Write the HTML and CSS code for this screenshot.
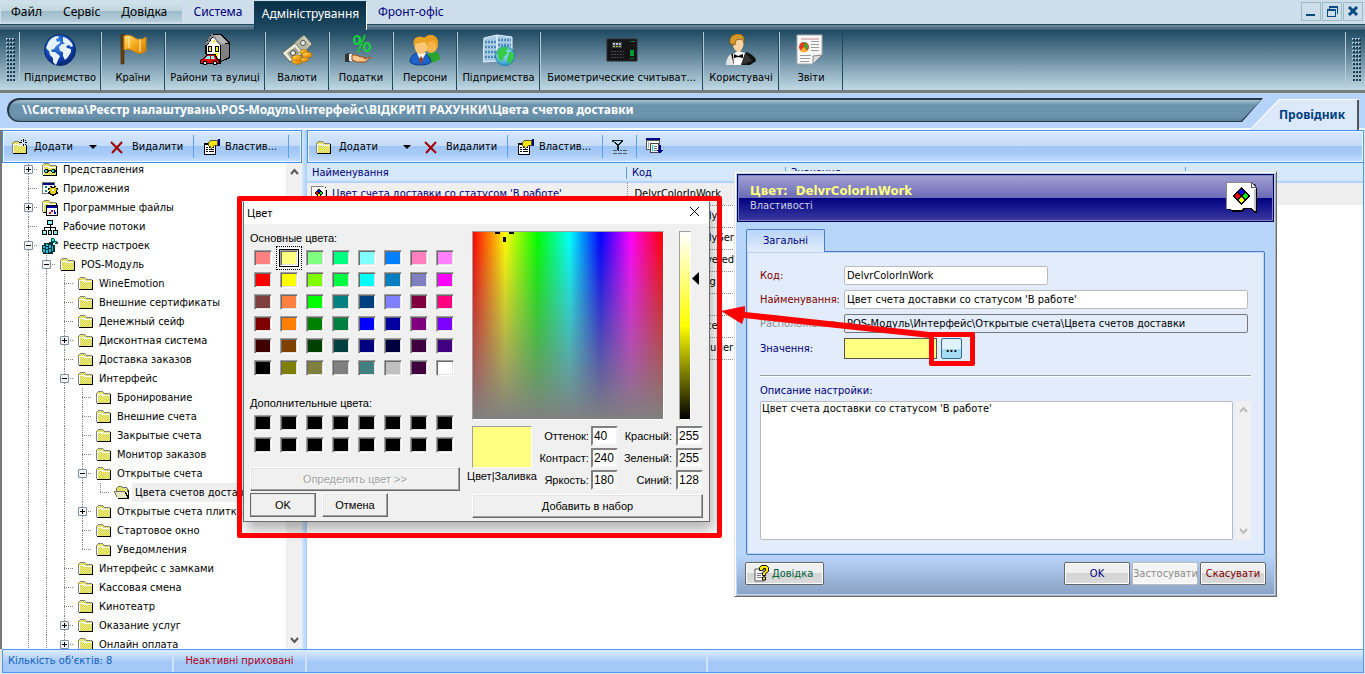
FILE: index.html
```html
<!DOCTYPE html>
<html lang="uk">
<head>
<meta charset="utf-8">
<title>Реєстр налаштувань</title>
<link rel="stylesheet" href="styles.css">
</head>
<body>
<svg class="defs" aria-hidden="true">
  <defs>
    <pattern id="dither" width="2" height="2" patternUnits="userSpaceOnUse"><path fill="#c8c8c8" d="M0 0h2v2H0z"/><path fill="#ffff00" d="M0 0h1v1H0zM1 1h1v1H1z"/></pattern>
    <radialGradient id="globe" cx=".4" cy=".3" r=".8"><stop offset="0" stop-color="#3f8df0"/><stop offset=".6" stop-color="#0d3fae"/><stop offset="1" stop-color="#05205f"/></radialGradient>
    <linearGradient id="gold" x2="1" y2="1"><stop offset="0" stop-color="#ffe27a"/><stop offset=".5" stop-color="#f7a91c"/><stop offset="1" stop-color="#c97a08"/></linearGradient>
    <radialGradient id="earth" cx=".4" cy=".3" r=".8"><stop offset="0" stop-color="#b8f4ff"/><stop offset="1" stop-color="#1e8fc4"/></radialGradient>
  </defs>
  <symbol id="folder" viewBox="0 0 16 16" shape-rendering="crispEdges"><path d="M1 3h1V2h5v1h1v1h6v9H1z" fill="url(#dither)"/><path d="M0 3h1v10H0zM1 2h1v1H1zM2 1h5v1H2zM7 2h1v1H7zM8 3h6v1H8z" fill="#808080"/><path d="M1 4h6v1h7v1H6V5H2v8H1z" fill="#fff"/><path d="M14 4h1v10H1v-1h13z" fill="#000"/></symbol>
  <symbol id="folder-open" viewBox="0 0 16 16" shape-rendering="crispEdges"><path d="M3 12V3h1V2h4v1h5v5l2 5H4z" fill="url(#dither)"/><path d="M2 3h1v5H2zM3 2h1v1H3zM4 1h4v1H4zM8 2h5v1H8zM13 3h1v4h-1zM0 6h11v1H0zM0 7h1v1H0zM1 8h1v2H1zM2 10h1v2H2z" fill="#707070"/><path d="M1 7h10v1h1v2h1v3H4v-1H3v-2H2V8H1z" fill="#e8e8c0"/><path d="M14 5h1v9H4v-1h9v-2h-1V9h-1V7h1v1h1v2h1z"/></symbol>
  <symbol id="views" viewBox="0 0 16 16" shape-rendering="crispEdges"><use href="#folder"/><path d="M3 7h3v1h4V7h3v1h1v2h-1v1h-3v-1H9V9H7v1H6v1H3v-1H2V8h1z"/><path d="M3 8h2v2H3zM10 8h2v2h-2z" fill="#0ff"/></symbol>
  <symbol id="apps" viewBox="0 0 16 16" shape-rendering="crispEdges"><path d="M0 1h13v12H0z" fill="#777"/><path d="M1 4h11v8H1z" fill="#fff"/><path d="M1 2h11v2H1z" fill="#000080"/><path d="M3 5h2v2H3zM3 9h2v2H3z" fill="#088"/><path d="M8 5h2v1h2V5h2v2h2v2h-1v2h1v2h-2v1h-2v1h-2v-1H8v-1H6v-2h1V9H6V7h2z"/><path d="M8 6h1v1h4V6h1v2h1v1h-1v3h-1v1H9v-1H8v-2H7V8h1z" fill="#e8d000"/><path d="M10 8h2v2h-2z" fill="#fff"/></symbol>
  <symbol id="progs" viewBox="0 0 16 16" shape-rendering="crispEdges"><use href="#folder" y="-1"/><path d="M4 5h12v11H4z"/><path d="M5 8h10v7H5z" fill="#fff"/><path d="M5 6h10v2H5z" fill="#00a"/><path d="M7 12h2v2H7z" fill="#d00"/><path d="M9 10h2v2H9z" fill="#808"/><path d="M12 10h1v2h1v2h-2z" fill="#00c"/></symbol>
  <symbol id="flows" viewBox="0 0 16 16" shape-rendering="crispEdges"><path d="M5 1h6v5H9v2h5v3h2v5h-5v-5h2V9H9v2h1v5H6v-5h2V9H3v2h2v5H0v-5h2V8h6V6H5z"/><path d="M6 2h4v3H6zM1 12h3v3H1zM7 12h2v3H7zM12 12h3v3h-3z" fill="#8ee"/></symbol>
  <symbol id="registry" viewBox="0 0 16 16" shape-rendering="crispEdges"><path d="M0 7h2V5h5V4h4v3h2v7h-2v2H1v-2H0z" fill="#033"/><path d="M1 8h2v2H1zM4 6h2v2H4zM4 9h2v2H4zM7 7h2v3H7zM1 11h2v3H1zM4 12h2v3H4zM7 11h2v3H7zM10 8h1v5h-1z" fill="#2bd"/><path d="M9 0h3v1h1v2h2v1h1v2h-3V5h-2V4H9z" fill="#055"/><path d="M10 1h2v2h-2zM12 4h2v1h-2z" fill="#0ee"/></symbol>
  <symbol id="note" viewBox="0 0 32 32" shape-rendering="crispEdges"><path d="M2 2h27l2 5v24h-2l-5-4h-4l-3 2v1H6l-1-2H1z"/><path d="M0 0h25l5 6v23h-2l-3-3h-8l-2 2H5l-1-1H0z" fill="#fff"/><path d="M0 0h25v1H1v26H0z" fill="#888"/><path d="M25 0h1v1h1v1h1v1h1v1h1v1h1v1h-6z" fill="#555"/><path d="M26 2h1v1h1v1h1v1h-3z" fill="#fff"/><path d="M28 7h2v22h-2z" fill="#c4c4c4"/><path d="M15 5l9 9-9 9-9-9z"/><path d="M15 7l3 3-3 3-3-3z" fill="#00f"/><path d="M11 11l3 3-3 3-3-3z" fill="#f00"/><path d="M19 11l3 3-3 3-3-3z" fill="#0e0"/><path d="M15 15l3 3-3 3-3-3z" fill="#ff0"/></symbol>
  <symbol id="cross" viewBox="0 0 16 16"><path d="M2 3l11 11M3 14L13 3" fill="none" stroke="#a00000" stroke-width="2"/></symbol>
  <symbol id="props" viewBox="0 0 17 16" shape-rendering="crispEdges"><path d="M1 4h12v12H1z"/><path d="M2 6h10v9H2z" fill="#fff"/><path d="M3 8h2v1H3zM6 8h5v1H6zM3 10h2v1H3zM6 10h5v1H6zM3 12h2v1H3zM6 12h5v1H6z"/><path d="M5 4l3-3h6v5h-2l-3 3H8l-1-2H6z" fill="#ffe800" stroke="#554"/><path d="M15 0h2v7h-2z" fill="#000080"/></symbol>
</svg>

<div class="app">
  <nav class="menubar">
    <div class="menu-group"><button>Файл</button><button>Сервіс</button><button>Довідка</button></div>
    <button class="menu-tab">Система</button>
    <button class="menu-tab active">Адміністрування</button>
    <button class="menu-tab">Фронт-офіс</button>
    <div class="win-buttons">
      <button aria-label="Згорнути"><svg width="18" height="17"><path d="M4 11h9v2H4z" fill="#004c83"/></svg></button>
      <button aria-label="Відновити"><svg width="18" height="17" shape-rendering="crispEdges"><path d="M6 3h9v2H6zM14 5h1v6h-1zM6 5h1v1H6zM4 6h9v2H4zM4 8h1v6H4zM12 8h1v6h-1zM5 13h7v1H5z" fill="#004c83"/></svg></button>
      <button aria-label="Закрити"><svg width="18" height="17"><path d="M5 4l8 8M13 4l-8 8" stroke="#004c83" stroke-width="3"/></svg></button>
    </div>
  </nav>

  <div class="ribbon">
    <span class="grip"></span>
    <button class="tool w81"><svg width="32" height="32" viewBox="0 0 32 32"><circle cx="16" cy="16" r="15.500" fill="url(#globe)" stroke="#0a2c70"/><path d="M4 9c2-4 6-7 10-7l1 2-3 1 1 3 3-1v2l-4 3-2 3-3 1 1 2 3 0 5 4-2 4-2 5-3-3v-4l-3-3-1-4-3-3zM19 3c5 1 9 5 10 9l-2 1-2-2-3 1 1 2 4 1v3l-3 5-3 3-2-4v-4l-3-1-1-4 3-3 3 0-2-2z" fill="#e6f3fb"/></svg><span>Підприємство</span></button>
    <button class="tool w64"><svg width="32" height="32" viewBox="0 0 32 32"><path d="M4 0h3v30H4z" fill="#6a420f" stroke="#3d2607" stroke-width=".6"/><path d="M7 2c5-2 8 0 11 2s7 2 11-1v14c-4 3-8 3-11 1s-6-4-11-2z" fill="url(#gold)" stroke="#c98410"/><path d="M12 2v12M23 5v13" stroke="#ffe89a" stroke-width="2" opacity=".6"/></svg><span>Країни</span></button>
    <button class="tool w100"><svg width="32" height="32" viewBox="0 0 32 32" shape-rendering="crispEdges"><path d="M6 11L12 0h10l9 9v15l-9 4H7z" fill="#000"/><path d="M22 9l8 1v13l-8 4z" fill="#808080"/><path d="M14 1h7l9 8-8 1z" fill="#b4b4b4"/><path d="M8 12l6-9 7 8v14H8z" fill="#fff"/><path d="M7 11l6-10 9 10" fill="none" stroke="#888" stroke-width="2"/><path d="M9 12h4v6H9zM16 12h4v6h-4z"/><path d="M10 13h2v4h-2zM17 13h2v4h-2zM14 6h2v3h-2zM15 19h4v7h-4z" fill="#ffef20"/><path d="M1 26l4-2 3-4h9l1 4 4 2v4H1z"/><path d="M2 26l4-2 2-3h8l1 4 3 2v2H2z" fill="#e00000"/><path d="M8 22h3v3H6zM12 22h3l1 3h-4z" fill="#8ff"/><circle cx="6" cy="29" r="2.500"/><circle cx="16" cy="29" r="2.500"/><path d="M5 28h2v2H5zM15 28h2v2h-2z" fill="#ddd"/></svg><span>Райони та вулиці</span></button>
    <button class="tool w64"><svg width="32" height="32" viewBox="0 0 32 32"><path d="M12 10L23 1l8 9-10 10z" fill="#cfd2be" stroke="#6c7060"/><path d="M1 19l13-10 9 10-14 9z" fill="#e8ead6" stroke="#555"/><path d="M6 19l8-6 5 6-9 6z" fill="#9ea28c"/><circle cx="12" cy="19" r="2.500" fill="#eee" stroke="#444"/><path d="M14 9l7-6 8 8-7 6z" fill="#b5b9a2"/><circle cx="22" cy="9" r="2.500" fill="#eee" stroke="#555"/><g fill="url(#gold)" stroke="#a66a00" stroke-width=".7"><ellipse cx="23" cy="18" rx="4" ry="2.500"/><ellipse cx="26" cy="21" rx="5" ry="3"/><path d="M11 24v4c2 3 9 3 10 0v-4z"/><ellipse cx="16" cy="24" rx="5" ry="3"/><path d="M20 24v3c2 2 6 1 7-1v-3z"/></g></svg><span>Валюти</span></button>
    <button class="tool w64"><svg width="32" height="32" viewBox="0 0 32 32"><path d="M20 1L13 18" stroke="#14c832" stroke-width="2"/><ellipse cx="12" cy="6" rx="3" ry="4" fill="none" stroke="#14d838" stroke-width="2.200"/><ellipse cx="22" cy="13" rx="3" ry="4" fill="none" stroke="#14d838" stroke-width="2.200"/><path d="M0 20l5-1v9H0z" fill="#333"/><path d="M4 20h3v7H4z" fill="#eee"/><path d="M7 21h4l5 2h4l-1 2 7-2-6 5H12l-5-2z" fill="#f8c78e" stroke="#9a4e14"/></svg><span>Податки</span></button>
    <button class="tool w64"><svg width="32" height="32" viewBox="0 0 32 32"><path d="M18 29v-8l6-4c5 1 7 4 7 8l-5 3z" fill="#27a52d"/><ellipse cx="22" cy="10" rx="7" ry="9" fill="#f5b54a"/><path d="M14 6c2-6 14-8 15 2l-1 6-3-7c-4 1-7 0-11-1z" fill="#e7a01d"/><path d="M1 28c0-6 4-9 10-9s10 3 11 9c-3 4-18 4-21 0z" fill="#1d62c8" stroke="#0a3c8a"/><path d="M8 19l4 9 5-9z" fill="#fff"/><path d="M12 22l2 3-2 5-2-5z" fill="#a8381c"/><ellipse cx="12" cy="12" rx="6.500" ry="8.500" fill="#fbc877"/><path d="M5 12C3 3 9 2 13 3s8 4 6 10l-3-5c-4 1-8 0-11 4z" fill="#e9a524"/></svg><span>Персони</span></button>
    <button class="tool w83"><svg width="32" height="32" viewBox="0 0 32 32"><path d="M1 4l13-3v26L0 28zM14 1l15 2v23H14z" fill="#a8cde6" stroke="#e3f2fb"/><path d="M2 8h11M2 13h11M2 18h11M2 23h11M15 6h13M15 11h13M15 16h13" stroke="#4f88b6" stroke-width="2.500" stroke-dasharray="2 1"/><circle cx="22" cy="22" r="9.500" fill="url(#earth)" stroke="#1b86a8"/><path d="M14 19c1-4 5-6 9-6l3 2-3 2 2 2-4 4-2 4-3-1-1-4zM27 17l4 3v4l-4 6-3-3 1-5z" fill="#36c94a"/></svg><span>Підприємства</span></button>
    <button class="tool w163"><svg width="32" height="32" viewBox="0 0 32 32"><path d="M1 5h30v22H1z" fill="#151517" stroke="#2d2d33"/><path d="M6 8h10v6H6z" fill="#39443e"/><path d="M7 9h2v2H7zM10 9h2v2h-2zM13 9h2v2h-2z" fill="#c8b8d8"/><path d="M7 12h2v1H7zM10 12h2v1h-2zM13 12h2v1h-2z" fill="#b0c070"/><path d="M5 17.500h13M5 20.500h13M5 23.500h13" stroke="#4a4a4e" stroke-dasharray="2 1"/><path d="M24 16h4v6h-4z" fill="#009a35"/><path d="M24 24.500h4M24 7.500h5" stroke="#176f3a"/></svg><span>Биометрические считыват...</span></button>
    <button class="tool w76"><svg width="32" height="32" viewBox="0 0 32 32"><path d="M2 31c1-8 3-11 8-12l7 3 5-4c5 3 9 5 9 9l-6 4z" fill="#111"/><path d="M8 20l5-3 7 2-4 12H9z" fill="#fff"/><path d="M9 20l4 2 5-2v4l-5-1-4 1z" fill="#000"/><path d="M1 31c0-5 2-9 5-11l3 11z" fill="#e4e4e4"/><path d="M16 31l5-12 6 8z" fill="#353535"/><path d="M8 4c4-5 11-3 11 2l-1 7-3 5-4-1c-3-3-4-7-3-13z" fill="#fbd3a0"/><path d="M5 10C3 2 10-1 15 0c4 1 5 5 4 9l-2-4-6 1-1 5z" fill="#d3992b" stroke="#5f3b00" stroke-width=".6"/></svg><span>Користувачі</span></button>
    <button class="tool w64"><svg width="32" height="32" viewBox="0 0 32 32"><path d="M2 1h25v20l-9 9H2z" fill="#f8f8f8" stroke="#aaa"/><path d="M27 21l-9 9v-8z" fill="#ddd" stroke="#888"/><path d="M6 5h18" stroke="#c88" /><circle cx="9" cy="13" r="5" fill="#e03c20"/><path d="M9 13V8a5 5 0 0 1 3 8z" fill="#4ba52a"/><path d="M9 13l3 4a5 5 0 0 1-7 0z" fill="#f7b52a"/><path d="M16 7.500h8M16 10.500h8M16 13.500h8M16 16.500h8M5 21.500h11M5 24.500h10M5 27.500h9" stroke="#999"/></svg><span>Звіти</span></button>
    <span class="ribbon-end"></span>
    <span class="grip grip-end"></span>
  </div>

  <div class="pathbar">
    <div class="path-shell"><div class="path">\\Система\Реєстр налаштувань\POS-Модуль\Інтерфейс\ВІДКРИТІ РАХУНКИ\Цвета счетов доставки</div></div>
    <div class="explorer-shell"><button class="explorer">Провідник</button></div>
  </div>

  <div class="workspace">
    <section class="left">
      <div class="toolbar">
        <button class="add"><svg width="16" height="16" shape-rendering="crispEdges"><use href="#folder" x="1" y="1"/><path d="M9 0h7v6H9z" fill="#c9dffb"/><path d="M12 0h1v3h-1zM12 5h1v2h-1zM8 3h3v1H8zM14 3h2v1h-2zM10 1h1v1h-1zM14 5h1v1h-1zM14 1h1v1h-1z"/></svg><span>Додати</span><i class="caret"></i></button>
        <button class="del"><svg width="16" height="16"><use href="#cross"/></svg><span>Видалити</span></button>
        <button class="prop"><svg width="17" height="16"><use href="#props"/></svg><span>Властив...</span></button>
      </div>
      <div class="tree-wrap">
        <ul class="tree">
          <li><i class="g t"><button class="plus" aria-label="Розгорнути"></button></i><svg><use href="#views"/></svg><span>Представления</span></li>
          <li><i class="g t"></i><svg><use href="#apps"/></svg><span>Приложения</span></li>
          <li><i class="g t"><button class="plus" aria-label="Розгорнути"></button></i><svg><use href="#progs"/></svg><span>Программные файлы</span></li>
          <li><i class="g t"></i><svg><use href="#flows"/></svg><span>Рабочие потоки</span></li>
          <li><i class="g t"><button aria-label="Згорнути"></button></i><svg><use href="#registry"/></svg><span>Реестр настроек</span></li>
          <li><i class="g v"></i><i class="g t"><button aria-label="Згорнути"></button></i><svg><use href="#folder"/></svg><span>POS-Модуль</span></li>
          <li><i class="g v"></i><i class="g v"></i><i class="g t"></i><svg><use href="#folder"/></svg><span>WineEmotion</span></li>
          <li><i class="g v"></i><i class="g v"></i><i class="g t"></i><svg><use href="#folder"/></svg><span>Внешние сертификаты</span></li>
          <li><i class="g v"></i><i class="g v"></i><i class="g t"></i><svg><use href="#folder"/></svg><span>Денежный сейф</span></li>
          <li><i class="g v"></i><i class="g v"></i><i class="g t"><button class="plus" aria-label="Розгорнути"></button></i><svg><use href="#folder"/></svg><span>Дисконтная система</span></li>
          <li><i class="g v"></i><i class="g v"></i><i class="g t"></i><svg><use href="#folder"/></svg><span>Доставка заказов</span></li>
          <li><i class="g v"></i><i class="g v"></i><i class="g t"><button aria-label="Згорнути"></button></i><svg><use href="#folder"/></svg><span>Интерфейс</span></li>
          <li><i class="g v"></i><i class="g v"></i><i class="g v"></i><i class="g t"></i><svg><use href="#folder"/></svg><span>Бронирование</span></li>
          <li><i class="g v"></i><i class="g v"></i><i class="g v"></i><i class="g t"></i><svg><use href="#folder"/></svg><span>Внешние счета</span></li>
          <li><i class="g v"></i><i class="g v"></i><i class="g v"></i><i class="g t"></i><svg><use href="#folder"/></svg><span>Закрытые счета</span></li>
          <li><i class="g v"></i><i class="g v"></i><i class="g v"></i><i class="g t"></i><svg><use href="#folder"/></svg><span>Монитор заказов</span></li>
          <li><i class="g v"></i><i class="g v"></i><i class="g v"></i><i class="g t"><button aria-label="Згорнути"></button></i><svg><use href="#folder"/></svg><span>Открытые счета</span></li>
          <li><i class="g v"></i><i class="g v"></i><i class="g v"></i><i class="g v"></i><i class="g l"></i><svg><use href="#folder-open"/></svg><span class="selected">Цвета счетов доставки</span></li>
          <li><i class="g v"></i><i class="g v"></i><i class="g v"></i><i class="g t"><button class="plus" aria-label="Розгорнути"></button></i><svg><use href="#folder"/></svg><span>Открытые счета плитками</span></li>
          <li><i class="g v"></i><i class="g v"></i><i class="g v"></i><i class="g t"></i><svg><use href="#folder"/></svg><span>Стартовое окно</span></li>
          <li><i class="g v"></i><i class="g v"></i><i class="g v"></i><i class="g l"></i><svg><use href="#folder"/></svg><span>Уведомления</span></li>
          <li><i class="g v"></i><i class="g v"></i><i class="g t"></i><svg><use href="#folder"/></svg><span>Интерфейс с замками</span></li>
          <li><i class="g v"></i><i class="g v"></i><i class="g t"></i><svg><use href="#folder"/></svg><span>Кассовая смена</span></li>
          <li><i class="g v"></i><i class="g v"></i><i class="g t"></i><svg><use href="#folder"/></svg><span>Кинотеатр</span></li>
          <li><i class="g v"></i><i class="g v"></i><i class="g t"><button class="plus" aria-label="Розгорнути"></button></i><svg><use href="#folder"/></svg><span>Оказание услуг</span></li>
          <li><i class="g v"></i><i class="g v"></i><i class="g t"><button class="plus" aria-label="Розгорнути"></button></i><svg><use href="#folder"/></svg><span>Онлайн оплата</span></li>
        </ul>
        <div class="scroll"><svg width="9" height="8"><path d="M1 6l3.500-4L8 6" fill="none" stroke="#555" stroke-width="2"/></svg><svg width="9" height="8"><path d="M1 2l3.500 4L8 2" fill="none" stroke="#555" stroke-width="2"/></svg></div>
      </div>
    </section>
    <div class="splitter"></div>
    <section class="right">
      <div class="toolbar">
        <button class="add"><svg width="16" height="16"><use href="#folder" y="1"/></svg><span>Додати</span><i class="caret"></i></button>
        <button class="del"><svg width="16" height="16"><use href="#cross"/></svg><span>Видалити</span></button>
        <button class="prop"><svg width="17" height="16"><use href="#props"/></svg><span>Властив...</span></button>
        <button class="flt" aria-label="Фільтр"><svg width="17" height="16" shape-rendering="crispEdges"><path d="M1 1h11v2h-1v1h-1v1H9v1H8v6H7v-1H6V6H5V5H4V4H3V3H1z" fill="#122"/><path d="M3 2h7v1H9v1H8v1H6V4H5V3H3z" fill="#bde"/><path d="M2 11h4v1H2zM9 11h2v1H9zM12 11h4v1h-4zM2 14h4v1H2zM7 14h4v1H7zM12 14h4v1h-4z" fill="#555"/></svg></button>
        <button class="cols" aria-label="Стовпці"><svg width="17" height="17" shape-rendering="crispEdges"><path d="M0 0h14v12H0z" fill="#555"/><path d="M1 3h12v8H1z" fill="#fff"/><path d="M0 0h14v2H0z" fill="#000090"/><path d="M2 4h1v6H2z" fill="#aaa"/><path d="M4 5h9v10H4z" fill="#444"/><path d="M5 6h7v8H5z" fill="#fff"/><path d="M6 7h1v6H6z" fill="#0cc"/><path d="M8 8h3v1H8zM8 10h3v1H8zM8 12h3v1H8z" fill="#777"/><path d="M13 7h2v5h2v1h-1v1h-1v1h-2v-1h-1v-1h-1v-1h2z" fill="#000090"/></svg></button>
      </div>
      <table class="list">
        <thead><tr><th class="c1">Найменування</th><th class="c2">Код</th><th class="c3">Значення</th><th class="c4"></th></tr></thead>
        <tbody>
          <tr class="current"><td><svg width="16" height="16"><use href="#note"/></svg>Цвет счета доставки со статусом 'В работе'</td><td>DelvrColorInWork</td><td></td><td></td></tr>
          <tr><td></td><td>DelvrColorReady</td><td></td><td></td></tr>
          <tr><td></td><td>DelvrColorReadySend</td><td></td><td></td></tr>
          <tr><td></td><td>DelvrColorDelivered</td><td></td><td></td></tr>
          <tr><td></td><td>DelvrColorDoing</td><td></td><td></td></tr>
          <tr><td></td><td>DelvrColorNew</td><td></td><td></td></tr>
          <tr><td></td><td>DelvrColorCancel</td><td></td><td></td></tr>
          <tr><td></td><td>DelvrColorToCourier</td><td></td><td></td></tr>
        </tbody>
      </table>
    </section>
  </div>

  <footer class="status"><span class="s1">Кількість об'єктів: 8</span><span class="s2">Неактивні приховані</span><span class="s3"></span></footer>
</div>

<section class="window props-window" aria-label="Властивості">
  <header class="props-head">
    <div><h1>Цвет:&nbsp; DelvrColorInWork</h1><p>Властивості</p></div>
    <svg width="32" height="32"><use href="#note"/></svg>
  </header>
  <div class="props-body">
    <button class="page-tab">Загальні</button>
    <div class="page">
      <div class="form">
        <label class="req" for="code">Код:</label><input id="code" class="short" value="DelvrColorInWork">
        <label class="req" for="name">Найменування:</label><input id="name" value="Цвет счета доставки со статусом 'В работе'">
        <label class="off" for="place">Расположение:</label><input id="place" class="ro" readonly value="POS-Модуль\Интерфейс\Открытые счета\Цвета счетов доставки">
        <label for="value">Значення:</label><div class="value"><input id="value" class="color"><button class="more" aria-label="Обрати колір"><b>...</b></button></div>
      </div>
      <hr>
      <label class="desc" for="desc">Описание настройки:</label>
      <div class="memo"><textarea id="desc">Цвет счета доставки со статусом 'В работе'</textarea><div class="scroll"><svg width="9" height="8"><path d="M1 6l3.500-4L8 6" fill="none" stroke="#bbb" stroke-width="2"/></svg><svg width="9" height="8"><path d="M1 2l3.500 4L8 2" fill="none" stroke="#bbb" stroke-width="2"/></svg></div></div>
    </div>
  </div>
  <footer class="props-foot">
    <button class="help"><svg width="16" height="17"><path d="M1 4h9v12H1z" fill="#fff" stroke="#555"/><path d="M3 8.500h5M3 10.500h4M3 12.500h5" stroke="#777"/><path d="M5.500 5.500v-3l2-2h5l2 2v4l-3 2v2h-3V7.500l3-2v-2h-2l-1 2zM8.500 12h3v3h-3z" fill="#ffe900" stroke="#111"/></svg>Довідка</button>
    <span class="grow"></span>
    <button class="ok">OK</button><button disabled>Застосувати</button><button class="cancel">Скасувати</button>
  </footer>
</section>

<section class="window color-window" aria-label="Цвет">
  <header class="color-head"><span>Цвет</span><button aria-label="Закрыть"><svg width="11" height="11"><path d="M1 1l9 9M10 1l-9 9" stroke="#000"/></svg></button></header>
  <div class="color-body">
    <div class="palette">
      <p>Основные цвета:</p>
      <div class="swatches">
        <button style="background:#ff8080"></button><button class="picked" style="background:#ffff80"></button><button style="background:#80ff80"></button><button style="background:#00ff80"></button><button style="background:#80ffff"></button><button style="background:#0080ff"></button><button style="background:#ff80c0"></button><button style="background:#ff80ff"></button>
        <button style="background:#ff0000"></button><button style="background:#ffff00"></button><button style="background:#80ff00"></button><button style="background:#00ff40"></button><button style="background:#00ffff"></button><button style="background:#0080c0"></button><button style="background:#8080c0"></button><button style="background:#ff00ff"></button>
        <button style="background:#804040"></button><button style="background:#ff8040"></button><button style="background:#00ff00"></button><button style="background:#008080"></button><button style="background:#004080"></button><button style="background:#8080ff"></button><button style="background:#800040"></button><button style="background:#ff0080"></button>
        <button style="background:#800000"></button><button style="background:#ff8000"></button><button style="background:#008000"></button><button style="background:#008040"></button><button style="background:#0000ff"></button><button style="background:#0000a0"></button><button style="background:#800080"></button><button style="background:#8000ff"></button>
        <button style="background:#400000"></button><button style="background:#804000"></button><button style="background:#004000"></button><button style="background:#004040"></button><button style="background:#000080"></button><button style="background:#000040"></button><button style="background:#400040"></button><button style="background:#400080"></button>
        <button style="background:#000000"></button><button style="background:#808000"></button><button style="background:#808040"></button><button style="background:#808080"></button><button style="background:#408080"></button><button style="background:#c0c0c0"></button><button style="background:#400040"></button><button style="background:#ffffff"></button>
      </div>
      <p class="custom">Дополнительные цвета:</p>
      <div class="swatches black">
        <button></button><button></button><button></button><button></button><button></button><button></button><button></button><button></button>
        <button></button><button></button><button></button><button></button><button></button><button></button><button></button><button></button>
      </div>
      <button class="classic define" disabled>Определить цвет &gt;&gt;</button>
      <div class="pair"><button class="classic default">OK</button><button class="classic">Отмена</button></div>
    </div>
    <div class="mixer">
      <div class="fields">
        <div class="spectrum"><svg width="20" height="12"><path d="M0 0h5v2H0zM14 0h5v2h-5zM8 5h3v5H8z"/></svg></div>
        <div class="lum"></div>
        <svg class="lum-mark" width="7" height="13"><path d="M7 0v13L0 6.500z"/></svg>
      </div>
      <div class="values">
        <div class="preview"><div class="chip"></div><span>Цвет|Заливка</span></div>
        <div class="nums">
          <label for="hue">Оттенок:</label><input id="hue" value="40"><label for="red">Красный:</label><input id="red" value="255">
          <label for="sat">Контраст:</label><input id="sat" value="240"><label for="green">Зеленый:</label><input id="green" value="255">
          <label for="lumv">Яркость:</label><input id="lumv" value="180"><label for="blue">Синий:</label><input id="blue" value="128">
        </div>
      </div>
      <button class="classic addset">Добавить в набор</button>
    </div>
  </div>
</section>

<div class="mark mark-big"></div>
<div class="mark mark-small"></div>
<svg class="arrow" width="210" height="40"><path d="M0 7L24 2v6l185 20v6L23 14l-2 6z" fill="#f00"/></svg>
</body>
</html>
```
FILE: styles.css
```css
* { box-sizing: border-box; }
body { margin: 0; height: 100vh; overflow: hidden; font: 11px/14px "DejaVu Sans Condensed", "Noto Sans", sans-serif; color: #000; background: #e4e4e4; }
button, input, textarea { font: inherit; color: inherit; margin: 0; padding: 0; border: 0; border-radius: 0; background: none; }
svg { display: block; flex: none; }
p, h1, ul { margin: 0; padding: 0; }
.defs { position: absolute; width: 0; height: 0; }
.app { height: 100vh; display: flex; flex-direction: column; padding-bottom: 1px; }

.menubar { flex: none; height: 24px; display: flex; align-items: flex-start; background: #cddde9; font: 12px/14px "Noto Sans", sans-serif; color: #000080; padding-top: 1px; }
.menu-group { display: flex; width: 181px; height: 21px; margin-left: 1px; color: #000; background: linear-gradient(#cfe4ea, #c0d4de 50%, #9ebccb 50%, #b8cfdc); }
.menu-group button { padding: 0 11px 0 10px; }
.menu-tab { height: 22px; padding: 0 11px; }
.menu-tab.active { position: relative; width: 113px; height: 29px; margin-left: auto; padding: 0 0 4px; color: #fff; background: linear-gradient(#072f48, #1f4a62); border: 1px solid #104058; border-bottom: 0; border-right-color: #fff; }
.menubar > .menu-tab:nth-child(2) { width: 72px; }
.menu-tab.active { margin-left: 0; }
.win-buttons { display: flex; gap: 1px; margin: 1px 2px 0 auto; }
.win-buttons button { border: 1px solid #9bbcc6; height: 19px; width: 20px; }

.ribbon { flex: none; height: 69px; display: flex; border-top: 1px solid #1f4a5f; border-bottom: 3px solid #777d7f; padding-top: 7px; background: linear-gradient(#6f8c9c, #3a5d70) top / 100% 5px no-repeat, linear-gradient(#1f4a62 5px, #7092a6 55%, #c0dae5); }
.grip { width: 9px; height: 43px; margin: 6px 5px 0 6px; background: radial-gradient(circle at 1px 1px, #163a50 1px, transparent 1px) 1px 1px / 3px 4px, radial-gradient(circle at 1px 1px, #a8c4d2 1px, transparent 1px) 0 0 / 3px 4px; }
.grip-end { margin-right: 4px; }
.tool { display: flex; flex-direction: column; align-items: center; gap: 5px; padding-top: 2px; border-left: 1px solid #b4ccd8; border-right: 1px solid #1f4a5f; white-space: nowrap; }
.w64 { width: 64px; } .w76 { width: 76px; } .w81 { width: 82px; } .w83 { width: 83px; } .w100 { width: 100px; } .w163 { width: 163px; }
.w81 { margin-left: -1px; }
.ribbon-end { flex: 1; border-right: 1px solid #b4ccd8; }

.pathbar { flex: none; height: 37px; display: flex; background: linear-gradient(#b6d3fa, #b6d3fa 35px, #fff 35px); padding: 5px 6px 0 7px; font: bold 12px/14px "Noto Sans", sans-serif; }
.path-shell { flex: 1; height: 24px; margin-right: -14px; padding: 2px 1px 1px 2px; background: #263846; border-radius: 12px 0 0 12px; clip-path: polygon(0 0, 100% 0, calc(100% - 21px) 100%, 0 100%); }
.path { height: 21px; padding-left: 13px; line-height: 20px; color: #fff; border-radius: 11px 0 0 11px; background: linear-gradient(#a9c2d1, #6b93ad 5px, #6b93ad 16px, #5c829b); clip-path: polygon(0 0, calc(100% - 1px) 0, calc(100% - 21px) 100%, 0 100%); white-space: nowrap; overflow: hidden; }
.explorer-shell { width: 110px; margin-top: 1px; height: 31px; background: #fff; clip-path: polygon(30px 0, 100% 0, 100% 100%, 0 100%); }
.explorer { width: 110px; height: 30px; margin-top: 1px; padding-left: 18px; color: #003f80; background: #dbe9fb; border-right: 2px solid #555; clip-path: polygon(31px 0, 100% 0, 100% 100%, 1px 100%); }

.workspace { flex: 1; min-height: 0; display: flex; border-left: 2px solid #777; }
.left { width: 300px; display: flex; flex-direction: column; }
.splitter { width: 5px; background: linear-gradient(90deg, #d6e8fc, #a9cdfa); }
.right { flex: 1; min-width: 0; background: #fff; border-right: 1px solid #4f9af0; margin-right: 1px; }
.toolbar { flex: none; height: 33px; display: flex; align-items: stretch; padding: 4px 0; border: 1px solid #3f90ee; box-shadow: inset 0 0 0 1px #eef6ff; background: linear-gradient(#d8e8fc, #c4dbf9 48%, #9fc5f6 50%, #a9ccf8 75%, #c6defb); }
.toolbar button { display: flex; align-items: center; gap: 7px; padding-left: 8px; white-space: nowrap; }
.toolbar .add { width: 98px; }
.toolbar .del { width: 93px; border-right: 1px solid #5b9fee; }
.toolbar .prop { width: 95px; padding-left: 9px; gap: 5px; border-right: 1px solid #5b9fee; }
.toolbar .flt { width: 34px; border-right: 1px solid #5b9fee; }
.toolbar .cols { width: 34px; padding-left: 9px; }
.right .add { width: 107px; }
.right .toolbar { border-right: 0; }
.caret { margin-left: auto; margin-right: 4px; border: 4px solid transparent; border-top-color: #000; border-bottom: 0; }

.tree-wrap { flex: 1; min-height: 0; display: flex; background: #fff; }
.tree { flex: 1; min-width: 0; overflow: hidden; list-style: none; padding-left: 17px; }
.tree li { height: 19px; display: flex; align-items: center; white-space: nowrap; }
.tree li:first-child { margin-top: -3px; }
.tree li > svg { width: 16px; height: 16px; margin-left: 5px; }
.tree li > span { padding: 0 0 0 5px; line-height: 19px; }
.tree .selected { background: #efefef; padding-left: 3px; margin-left: 2px; }
.g { flex: none; width: 18px; height: 19px; display: flex; align-items: center; justify-content: center; background: repeating-linear-gradient(#808080 0 1px, transparent 1px 2px) 9px 0 / 1px 100% no-repeat; }
.g.t { background: repeating-linear-gradient(#808080 0 1px, transparent 1px 2px) 9px 0 / 1px 100% no-repeat, repeating-linear-gradient(90deg, #808080 0 1px, transparent 1px 2px) 9px 9px / 9px 1px no-repeat; }
.g.l { background: repeating-linear-gradient(#808080 0 1px, transparent 1px 2px) 9px 0 / 1px 10px no-repeat, repeating-linear-gradient(90deg, #808080 0 1px, transparent 1px 2px) 9px 9px / 9px 1px no-repeat; }
.g button { width: 9px; height: 9px; border: 1px solid #7c8ea0; border-radius: 1px; background: linear-gradient(#000, #000) center / 5px 1px no-repeat, #f4f4f4; }
.g .plus { background: linear-gradient(#000, #000) center / 5px 1px no-repeat, linear-gradient(#000, #000) center / 1px 5px no-repeat, #f4f4f4; }
.scroll { width: 16px; display: flex; flex-direction: column; justify-content: space-between; align-items: center; padding: 5px 0; background: #f0f0f0; }

.list { width: 100%; table-layout: fixed; border-collapse: collapse; }
.list th { height: 20px; padding: 0 5px; text-align: left; font-weight: normal; color: #000080; background: linear-gradient(#5b9fee, #5b9fee) right 4px / 1px 12px no-repeat, linear-gradient(#d6e8fc 17px, #a3cbfa); }
.list .c1 { width: 320px; } .list .c2 { width: 159px; } .list .c3 { width: 400px; }
.list .c4 { background: linear-gradient(#d6e8fc 17px, #a3cbfa); }
.list td { height: 22px; padding: 0 7px; white-space: nowrap; overflow: hidden; border-right: 1px dotted #888; border-bottom: 1px dotted #888; }
.list td:nth-child(n+3) { border: 0; }
.list td:first-child { padding-left: 4px; color: #000080; }
.list td svg { display: inline-block; vertical-align: middle; margin-right: 5px; }
.list .current { background: #efefef; }

.status { flex: none; height: 24px; margin: 0 1px 0 2px; display: flex; line-height: 22px; border: 1px solid #4f9af0; background: linear-gradient(#dfecfd, #a5c9f7 55%); color: #1060c0; white-space: nowrap; }
.status span { border-right: 2px solid #cfe3fc; }
.s1 { width: 171px; padding-left: 5px; }
.s2 { width: 133px; text-align: center; color: #b00020; }
.s3 { width: 401px; }

.window { position: absolute; }
.props-window { left: 734px; top: 171px; width: 543px; display: flex; flex-direction: column; background: #b8d5fa; border: 1px solid #e4e4e4; border-right-color: #696969; border-bottom-color: #696969; box-shadow: inset 1px 1px #fff, inset -1px -1px #b0b0b0; padding: 2px; }
.props-head { display: flex; justify-content: space-between; align-items: flex-start; height: 48px; padding: 6px 14px 0 11px; border: 2px solid #8080c8; outline: 1px solid #000050; outline-offset: -1px; background: linear-gradient(#a09fd3, #6c6bb6 50%, #000080 50%, #3838a0); color: #d0d0e8; }
.props-head h1 { font-size: 13px; line-height: 17px; color: #ffff80; }
.props-body { padding: 7px 9px 0; }
.page-tab { position: relative; display: block; width: 79px; height: 23px; margin-bottom: -1px; color: #000080; border: 1px solid #4a7dc6; border-bottom: 0; border-radius: 2px 2px 0 0; background: linear-gradient(#b8d5fa, #e2ecfb); }
.page { padding: 14px 13px; border: 1px solid #4a7dc6; box-shadow: inset 0 0 0 1px #bcd3f5; border-radius: 0 2px 2px 2px; background: #e2ecfb; }
.form { display: grid; grid-template-columns: 84px 1fr; gap: 5px 0; align-items: center; padding-right: 3px; color: #000080; }
.form input { width: 100%; height: 19px; padding: 0 2px; color: #000; background: #fff; border: 1px solid #bbb; border-radius: 2px; }
.form .short { width: 204px; }
.form .ro { border-color: #777; background: #e2ecfb; }
.form .req { color: #800000; }
.form .off { color: #8c8c8c; }
.value { display: flex; align-items: center; gap: 4px; }
.form .color { width: 93px; height: 21px; border-color: #555; border-radius: 0; background: #ffff80; }
.more { width: 21px; height: 21px; border: 1px solid #2f6c9c; border-radius: 2px; background: linear-gradient(#e0f2fb 50%, #a6dbf5 50%); color: #000; line-height: 15px; }
.page hr { margin: 16px 0 7px; border: 0; height: 2px; background: linear-gradient(#999 50%, #fff 50%); }
.desc { display: block; color: #000080; margin-bottom: 3px; }
.memo { display: flex; gap: 2px; }
.memo textarea { flex: 1; height: 139px; padding: 0 1px; resize: none; background: #fff; border: 1px solid #bbb; border-radius: 2px; }
.props-foot { display: flex; gap: 2px; padding: 7px 8px 9px; background: linear-gradient(#b8d5fa, #8ba3c4); }
.props-foot button { width: 66px; height: 23px; border: 1px solid #666; border-radius: 2px; box-shadow: inset 0 0 0 1px #fff; background: linear-gradient(#efefef 50%, #d4d4d4 50%, #dadada); white-space: nowrap; }
.props-foot .help { width: 79px; display: flex; align-items: center; gap: 2px; padding-left: 8px; color: #006040; }
.props-foot .ok { color: #000080; }
.props-foot .cancel { color: #800000; }
.props-foot button:disabled { color: #8c8c8c; background: #f4f4f4; border-color: #bbb; }
.grow { flex: 1; }

.color-window { left: 243px; top: 201px; width: 467px; height: 321px; border: 1px solid #6b6b6b; border-top-color: #fff; background: #f0f0f0; box-shadow: 3px 8px 12px rgba(0,0,0,.3); font: 11px/14px "Liberation Sans", Arial, sans-serif; }
.color-head { display: flex; justify-content: space-between; align-items: center; height: 22px; padding: 0 9px 0 3px; background: #fff; font: 11px/20px "Noto Sans", sans-serif; }
.color-head button { margin-bottom: 4px; }
.color-body { display: flex; gap: 12px; padding: 7px 6px 0 5px; }
.palette { width: 211px; padding-left: 1px; }
.swatches { display: grid; grid-template-columns: repeat(8, 18px); gap: 6px 8px; padding: 5px 0 0 4px; }
.swatches button { height: 16px; border: 1px solid; border-color: #a0a0a0 #fff #fff #a0a0a0; box-shadow: inset 1px 1px #696969, inset -1px -1px #e3e3e3; }
.swatches .picked { outline: 1px solid #000; box-shadow: inset 1px 1px #696969, inset -1px -1px #e3e3e3, 0 0 0 2px #fff; position: relative; }
.swatches .picked::after { content: ""; position: absolute; inset: -5px; border: 1px dotted #000; }
.black button { background: #000; }
.custom { margin-top: 20px; }
.classic { border: 1px solid; border-color: #fff #696969 #696969 #fff; box-shadow: inset -1px -1px #a0a0a0, inset 1px 1px #e3e3e3; background: #f0f0f0; height: 24px; width: 66px; }
.classic:disabled { color: #a0a0a0; text-shadow: 1px 1px #fff; }
.define { width: 210px; margin-top: 14px; }
.pair { display: flex; gap: 6px; margin-top: 2px; }
.default { outline: 1px solid #696969; outline-offset: -1px; }
.mixer { flex: 1; }
.fields { display: flex; }
.spectrum { width: 192px; height: 189px; border: 1px solid #a0a0a0; border-right-color: #fff; border-bottom-color: #fff; padding-left: 22px; background: linear-gradient(transparent, #808080), linear-gradient(90deg, #f00, #ff0 17%, #0f0 34%, #0ff 51%, #00f 67%, #f0f 83%, #f00); }
.lum { width: 12px; margin-left: 15px; border: 1px solid #a0a0a0; border-right-color: #fff; border-bottom-color: #fff; background: linear-gradient(#fff, #ff0 50%, #000); }
.lum-mark { margin: 41px 0 0 1px; }
.values { display: flex; justify-content: space-between; margin-top: 6px; height: 68px; }
.preview { width: 70px; margin-left: -5px; white-space: nowrap; }
.chip { width: 60px; height: 42px; margin: 0 0 1px 5px; border: 1px solid #a0a0a0; border-right-color: #fff; border-bottom-color: #fff; background: #ffff80; }
.nums { display: grid; grid-template-columns: auto 27px auto 27px; column-gap: 2px; row-gap: 2px; align-items: center; align-content: start; text-align: right; white-space: nowrap; }
.nums label:nth-of-type(even) { padding: 0 2px 0 4px; }
.nums input { width: 27px; height: 20px; padding-left: 1px; background: #fff; border: 2px solid; border-color: #808080 #f4f4f4 #f4f4f4 #808080; font-size: 12px; }
.addset { width: 231px; }

.mark { position: absolute; border: 5px solid #f00; border-radius: 2px; }
.mark-big { left: 237px; top: 196px; width: 485px; height: 342px; }
.mark-small { left: 929px; top: 332px; width: 46px; height: 34px; }
.arrow { position: absolute; left: 721px; top: 304px; }
```
